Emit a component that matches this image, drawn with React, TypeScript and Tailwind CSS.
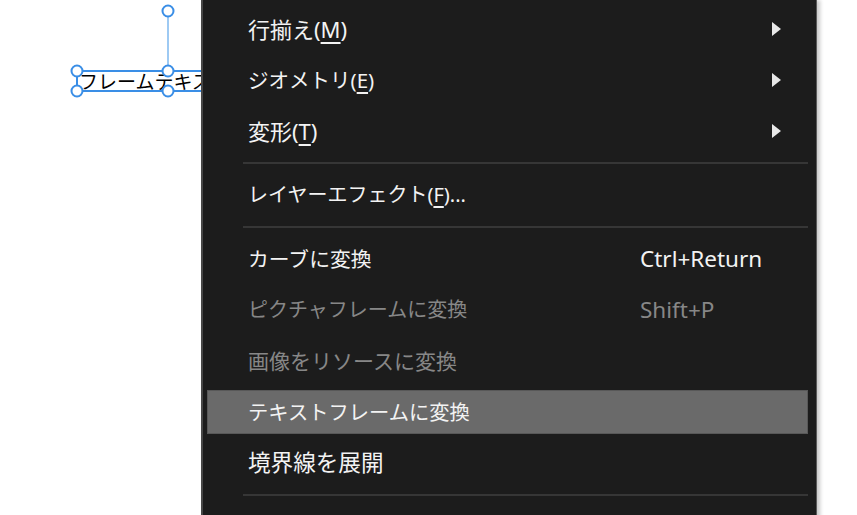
import React from "react";

type Item =
  | { kind: "item"; label: React.ReactNode; size: string; shortcut?: string; arrow?: boolean; disabled?: boolean; active?: boolean }
  | { kind: "sep" };

const U = ({ c }: { c: string }) => (
  <span className="underline decoration-[1.5px] underline-offset-[4px]">{c}</span>
);

const items: Item[] = [
  { kind: "item", label: <>行揃え(<U c="M" />)</>, size: "text-[22px]", arrow: true },
  { kind: "item", label: <>ジオメトリ(<U c="E" />)</>, size: "text-[20.5px]", arrow: true },
  { kind: "item", label: <>変形(<U c="T" />)</>, size: "text-[22px]", arrow: true },
  { kind: "sep" },
  { kind: "item", label: <>レイヤーエフェクト(<U c="F" />)...</>, size: "text-[20px]" },
  { kind: "sep" },
  { kind: "item", label: <>カーブに変換</>, size: "text-[20.8px]", shortcut: "Ctrl+Return" },
  { kind: "item", label: <>ピクチャフレームに変換</>, size: "text-[20px]", shortcut: "Shift+P", disabled: true },
  { kind: "item", label: <>画像をリソースに変換</>, size: "text-[21px]", disabled: true },
  { kind: "item", label: <>テキストフレームに変換</>, size: "text-[20.3px]", active: true },
  { kind: "item", label: <>境界線を展開</>, size: "text-[22.6px]" },
  { kind: "sep" },
  { kind: "item", label: <>グループ化(<U c="G" />)</>, size: "text-[22px]" },
];

function Arrow() {
  return (
    <svg width="9" height="14" viewBox="0 0 9 14" className="block">
      <polygon points="0,0 9,7 0,14" fill="#e8e8e8" />
    </svg>
  );
}

export default function App() {
  return (
    <div className="relative w-[857px] h-[515px] overflow-hidden bg-white font-['Noto_Sans','Noto_Sans_CJK_JP',sans-serif]">
      {/* canvas text */}
      <span className="absolute left-[79px] top-[68px] text-[19px] leading-[26px] text-black whitespace-nowrap font-['Noto_Sans_CJK_JP',sans-serif]">
        フレームテキストフレーム
      </span>
      {/* selection graphics */}
      <svg className="absolute left-0 top-0" width="260" height="110" viewBox="0 0 260 110">
        <line x1="168" y1="11" x2="168" y2="71" stroke="#86bdf0" strokeWidth="1.6" />
        <rect x="77" y="71" width="200" height="20" fill="none" stroke="#3a8ee6" strokeWidth="2" />
        {[
          [168, 11],
          [77, 71],
          [77, 91],
          [168, 71],
          [168, 91],
        ].map(([cx, cy], i) => (
          <circle key={i} cx={cx} cy={cy} r="5.5" fill="white" stroke="#3a8ee6" strokeWidth="2" />
        ))}
      </svg>

      {/* context menu */}
      <div className="absolute left-[201px] top-0 w-[616px] h-[560px] bg-[#1c1c1c] border-l-2 border-l-[#474747] border-r border-r-[#5a5a5a] shadow-[3px_0_4px_rgba(0,0,0,0.22)]">
        <div className="flex flex-col gap-[7px] pt-[7px] pl-[4px] pr-[8px]">
          {items.map((it, i) =>
            it.kind === "sep" ? (
              <div key={i} className="h-[6px] flex items-center pl-[36px]">
                <div className="h-[2px] flex-1 bg-[#363636]" />
              </div>
            ) : (
              <div
                key={i}
                className={
                  "h-[44px] flex items-center pl-[40px] pr-[26px] leading-[30px] whitespace-nowrap " +
                  (it.active ? "bg-[#6a6a6a] border border-[#585858] " : "border border-transparent ") +
                  (it.disabled ? "text-[#878787]" : "text-[#f3f3f3]")
                }
              >
                <div className={"w-[392px] shrink-0 " + it.size}>{it.label}</div>
                <div className="flex-1 text-[22.5px]">{it.shortcut}</div>
                <div className="w-[9px]">{it.arrow ? <Arrow /> : null}</div>
              </div>
            )
          )}
        </div>
      </div>
    </div>
  );
}
